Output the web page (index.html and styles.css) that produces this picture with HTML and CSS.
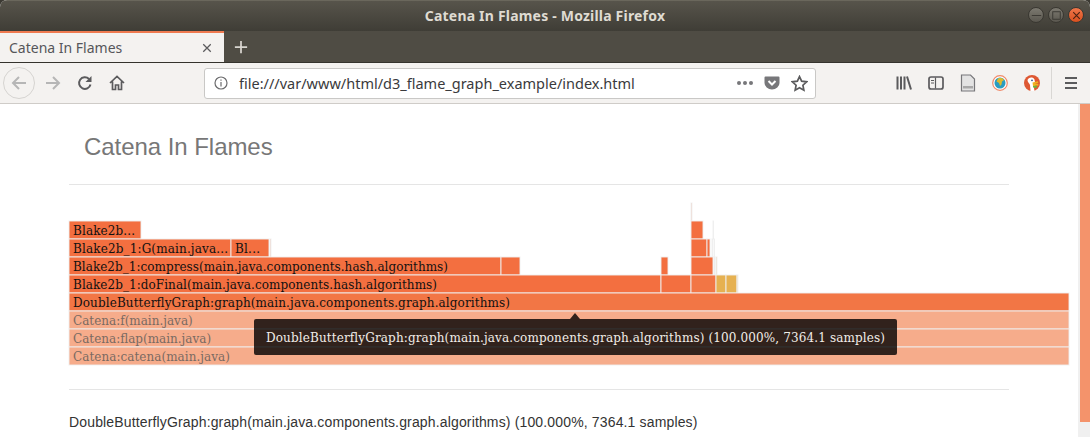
FILE: index.html
```html
<!DOCTYPE html>
<html lang="en">
<head>
    <meta charset="UTF-8">
    <title>Catena In Flames</title>
    <link rel="stylesheet" href="styles.css">
</head>
<body>
    <div class="window">
        <div class="titlebar">
            <span class="window-title">Catena In Flames - Mozilla Firefox</span>
            <div class="window-buttons">
                <span class="win-btn"><svg viewBox="0 0 16 16"><path d="M3 8h10" class="win-glyph"/></svg></span>
                <span class="win-btn"><svg viewBox="0 0 16 16"><rect x="4" y="4" width="8" height="8" class="win-glyph"/></svg></span>
                <span class="win-btn win-close"><svg viewBox="0 0 16 16"><path d="M4.500 4.500l7 7M11.500 4.500l-7 7" class="win-glyph dark"/></svg></span>
            </div>
        </div>

        <div class="tabstrip">
            <div class="tab">
                <span class="tab-label">Catena In Flames</span>
                <svg class="tab-close" viewBox="0 0 12 12"><path d="M1.500 1.500l9 9M10.500 1.500l-9 9"/></svg>
            </div>
            <svg class="new-tab" viewBox="0 0 16 16"><path d="M8 1v14M1 8h14"/></svg>
        </div>

        <div class="toolbar">
            <span class="back-btn">
                <svg class="icon" viewBox="0 0 16 16"><path class="line pale" d="M15 8H2M8 2L2 8l6 6"/></svg>
            </span>
            <svg class="icon forward" viewBox="0 0 16 16"><path class="line pale" d="M1 8h13M8 2l6 6-6 6"/></svg>
            <svg class="icon reload" viewBox="0 0 16 16"><path class="line" d="M13.500 9.500A5.800 5.800 0 1 1 12 4"/><path class="solid" d="M14.500 1v6h-6z"/></svg>
            <svg class="icon home" viewBox="0 0 16 16"><path class="line thin" d="M1 8l7-6.500L15 8M3.500 6.500V14.500H6.500V10H9.500V14.500H12.500V6.500"/></svg>

            <div class="urlbar">
                <svg class="info" viewBox="0 0 14 14"><circle cx="7" cy="7" r="6"/><path d="M7 6v4.500M7 3.500v1.300"/></svg>
                <span class="url">file:///var/www/html/d3_flame_graph_example/index.html</span>
                <span class="dots"><i></i><i></i><i></i></span>
                <svg class="pocket" viewBox="0 0 16 16"><path class="solid" d="M1.500 1.500h13a1 1 0 0 1 1 1V8a7.500 6.500 0 0 1-15 0V2.500a1 1 0 0 1 1-1z"/><path class="pocket-check" d="M4.500 6L8 9.500 11.500 6"/></svg>
                <svg class="star" viewBox="0 0 16 16"><path d="M8 1.500l2 4.300 4.700.6-3.500 3.200.9 4.700L8 12l-4.100 2.300.9-4.700L1.300 6.400 6 5.800z"/></svg>
            </div>

            <div class="tools">
                <svg class="icon" viewBox="0 0 16 16"><path class="line" d="M1.500 1.500v13M5 1.500v13M8.500 1.500v13M11 1.500l4 13"/></svg>
                <svg class="icon" viewBox="0 0 16 16"><rect class="line thin" x="1" y="2" width="14" height="12" rx="2"/><path class="sidebar-lines" d="M7.500 2.500v11M3 5.500h3M3 8h3"/></svg>
                <svg class="icon page-icon" viewBox="0 0 16 18"><path class="page-sheet" d="M1.500 1h9l4 4v12h-13z"/><path class="page-bar" d="M3 12h10v2.500H3z"/></svg>
                <svg class="icon" viewBox="0 0 16 16"><circle cx="8" cy="8" r="7.300" class="globe-ring"/><circle cx="8" cy="8" r="5.500" class="globe-sea"/><path class="globe-land" d="M6 3.500c2-1 5-.5 6 1.500l-2 1.500-.5 3L8 11 7 8 4.500 6.500z"/></svg>
                <svg class="icon" viewBox="0 0 16 16"><circle cx="8" cy="8" r="8" class="duck-bg"/><path class="duck-body" d="M3.500 5C4.500 2 9 1.500 10.500 4.500L11 7.500 10 13l.5 3H6.500L6 10C5.500 8 3.500 7.500 3.500 5z"/><path class="duck-beak" d="M8.500 7.500l5.500-1.300.3 1.600-3.800 1 3.800-.1.200 1.700L9 11z"/><path class="duck-tie" d="M9 11l4-.5-.5 2.500-3.500-.5z"/><circle cx="8" cy="5.300" r=".9" class="duck-eye"/></svg>
            </div>
            <svg class="icon menu" viewBox="0 0 16 16"><path class="line" d="M2 3h12M2 8h12M2 13h12"/></svg>
        </div>

        <div class="viewport">
            <div class="page">
                <div class="header">
                    <h3>Catena In Flames</h3>
                </div>

                <div class="chart">
                    <svg class="flame" width="1000" height="162" viewBox="0 0 1000 162">
                        <rect class="frame" x="622" y="0" width="1" height="18"/>

                        <rect class="frame" x="0" y="18" width="72" height="18"/>
                        <text class="label" x="4" y="32" textLength="62">Blake2b...</text>
                        <rect class="frame" x="622" y="18" width="12" height="18"/>
                        <rect class="frame thin" x="644" y="18" width="0.5" height="18"/>

                        <rect class="frame" x="0" y="36" width="162" height="18"/>
                        <text class="label" x="4" y="50" textLength="155">Blake2b_1:G(main.java...</text>
                        <rect class="frame" x="162" y="36" width="38" height="18"/>
                        <text class="label" x="166" y="50" textLength="25">Bl...</text>
                        <rect class="frame" x="201" y="36" width="1" height="18"/>
                        <rect class="frame" x="622" y="36" width="16" height="18"/>
                        <rect class="frame" x="638" y="36" width="3" height="18"/>
                        <rect class="frame thin" x="643" y="36" width="0.5" height="18"/>
                        <rect class="frame thin" x="645" y="36" width="0.5" height="18"/>

                        <rect class="frame" x="0" y="54" width="432" height="18"/>
                        <text class="label" x="4" y="68" textLength="375">Blake2b_1:compress(main.java.components.hash.algorithms)</text>
                        <rect class="frame" x="432" y="54" width="19" height="18"/>
                        <rect class="frame" x="592" y="54" width="7" height="18"/>
                        <rect class="frame" x="622" y="54" width="22" height="18"/>
                        <rect class="frame thin" x="645" y="54" width="1" height="18"/>
                        <rect class="frame warm" x="647" y="54" width="1" height="18"/>

                        <rect class="frame" x="0" y="72" width="592" height="18"/>
                        <text class="label" x="4" y="86" textLength="364">Blake2b_1:doFinal(main.java.components.hash.algorithms)</text>
                        <rect class="frame" x="592" y="72" width="30" height="18"/>
                        <rect class="frame amber" x="622" y="72" width="25" height="18"/>
                        <rect class="frame warm" x="647" y="72" width="10" height="18"/>
                        <rect class="frame warm" x="657" y="72" width="11" height="18"/>
                        <rect class="frame warm" x="668" y="72" width="1" height="18"/>

                        <rect class="frame amber" x="0" y="90" width="1000" height="18"/>
                        <text class="label" x="4" y="104" textLength="437">DoubleButterflyGraph:graph(main.java.components.graph.algorithms)</text>

                        <rect class="frame pale" x="0" y="108" width="1000" height="18"/>
                        <text class="label faded" x="4" y="122">Catena:f(main.java)</text>
                        <rect class="frame pale" x="0" y="126" width="1000" height="18"/>
                        <text class="label faded" x="4" y="140">Catena:flap(main.java)</text>
                        <rect class="frame pale" x="0" y="144" width="1000" height="18"/>
                        <text class="label faded" x="4" y="158" textLength="157">Catena:catena(main.java)</text>
                    </svg>
                    <div class="tooltip">DoubleButterflyGraph:graph(main.java.components.graph.algorithms) (100.000%, 7364.1 samples)</div>
                </div>

                <div class="details">DoubleButterflyGraph:graph(main.java.components.graph.algorithms) (100.000%, 7364.1 samples)</div>
            </div>
            <div class="scrollbar"><div class="thumb"></div></div>
        </div>
    </div>
</body>
</html>
```

FILE: styles.css
```css
html, body {
    margin: 0;
    padding: 0;
    height: 100%;
    background-color: #3c3a33;
    overflow: hidden;
}

.window {
    width: 1090px;
    height: 437px;
    display: flex;
    flex-direction: column;
    overflow: hidden;
    border-radius: 7px 7px 0 0;
    background-color: #fff;
}

/* window title bar */
.titlebar {
    height: 31px;
    flex: none;
    display: flex;
    align-items: center;
    justify-content: center;
    position: relative;
    box-sizing: border-box;
    padding-bottom: 2px;
    border-top: 1px solid #6a675c;
    background: linear-gradient(#57544b, #3f3d36);
}

.window-title {
    font-family: "Noto Sans", sans-serif;
    font-size: 14px;
    font-weight: bold;
    color: #dfdbd2;
    letter-spacing: 0.2px;
}

.window-buttons {
    position: absolute;
    right: 6px;
    top: 6px;
    display: flex;
    gap: 4px;
}

.win-btn {
    width: 16px;
    height: 16px;
    box-sizing: border-box;
    border-radius: 50%;
    background: linear-gradient(#7c7970, #5a574f);
    border: 0.5px solid #3a3832;
    display: block;
}

.win-btn svg {
    display: block;
    width: 15px;
    height: 15px;
}

.win-close {
    background: linear-gradient(#f0764a, #d9501f);
}

.win-glyph {
    fill: none;
    stroke: #3a3832;
    stroke-width: 1;
}

.win-glyph.dark {
    stroke: #4a2212;
    stroke-width: 1.2;
}

/* tabs */
.tabstrip {
    height: 32px;
    flex: none;
    box-sizing: border-box;
    display: flex;
    align-items: center;
    background-color: #4f4c44;
    border-bottom: 1px solid #35332d;
}

.tab {
    width: 224px;
    height: 31px;
    box-sizing: border-box;
    display: flex;
    align-items: center;
    justify-content: space-between;
    padding: 0 12px 0 9px;
    background-color: #f4f2f0;
    border-top: 2px solid #ef7a50;
}

.tab-label {
    font-family: "Noto Sans", sans-serif;
    font-size: 14px;
    color: #56565a;
}

.tab-close {
    width: 10px;
    height: 10px;
    fill: none;
    stroke: #5a5a5c;
    stroke-width: 1.5;
}

.new-tab {
    width: 14px;
    height: 14px;
    margin-left: 10px;
    fill: none;
    stroke: #d8d5cf;
    stroke-width: 2;
}

/* navigation toolbar */
.toolbar {
    height: 41px;
    flex: none;
    box-sizing: border-box;
    display: flex;
    align-items: center;
    padding-left: 3px;
    background-color: #f4f2f0;
    border-bottom: 1px solid #cfccc8;
}

.icon {
    width: 16px;
    height: 16px;
    flex: none;
}

.line {
    fill: none;
    stroke: #5b5b5d;
    stroke-width: 2;
}

.line.thin {
    stroke-width: 1.7;
}

.line.pale {
    stroke: #b6b6b6;
}

.solid {
    fill: #5b5b5d;
}

.back-btn {
    width: 32px;
    height: 32px;
    box-sizing: border-box;
    border: 1px solid #d6d4d1;
    border-radius: 50%;
    display: flex;
    align-items: center;
    justify-content: center;
}

.forward {
    margin-left: 10px;
}

.reload {
    margin-left: 16px;
}

.home {
    margin-left: 16px;
}

.urlbar {
    width: 612px;
    height: 31px;
    margin-left: 79px;
    flex: none;
    box-sizing: border-box;
    display: flex;
    align-items: center;
    padding: 0 7px 0 9px;
    background-color: #fff;
    border: 1px solid #c9c8c6;
    border-radius: 3px;
}

.info {
    width: 14px;
    height: 14px;
    flex: none;
    fill: none;
    stroke: #6b6b6d;
    stroke-width: 1.2;
}

.url {
    flex: 1;
    margin-left: 11px;
    font-family: "Noto Sans", sans-serif;
    font-size: 14.5px;
    color: #3a3a3c;
}

.dots {
    display: flex;
    gap: 2px;
    margin-right: 11px;
}

.dots i {
    width: 4px;
    height: 4px;
    border-radius: 50%;
    background-color: #77777a;
}

.pocket {
    width: 16px;
    height: 16px;
    margin-right: 11px;
}

.pocket .solid {
    fill: #77777a;
}

.pocket-check {
    fill: none;
    stroke: #fff;
    stroke-width: 2;
}

.star {
    width: 17px;
    height: 17px;
    fill: none;
    stroke: #5b5b5d;
    stroke-width: 1.6;
}

.tools {
    display: flex;
    align-items: center;
    gap: 16px;
    margin-left: 80px;
    padding-right: 11px;
    border-right: 1px solid #d9d7d4;
    height: 32px;
}

.page-icon {
    height: 18px;
}

.page-sheet {
    fill: #e3e3e3;
    stroke: #77777a;
    stroke-width: 1.2;
}

.page-bar {
    fill: #a8a8a8;
}

.sidebar-lines {
    fill: none;
    stroke: #5b5b5d;
    stroke-width: 1.2;
}

.globe-ring {
    fill: #fff;
    stroke: #f08a6a;
    stroke-width: 1.2;
}

.globe-sea {
    fill: #2a9cc0;
}

.globe-land {
    fill: #d9b92f;
}

.duck-bg {
    fill: #de5833;
}

.duck-body {
    fill: #fff;
}

.duck-beak {
    fill: #f0b020;
}

.duck-tie {
    fill: #6cb33f;
}

.duck-eye {
    fill: #2d4f8e;
}

.menu {
    margin-left: 11px;
}

/* page area */
.viewport {
    flex: 1;
    min-height: 0;
    display: flex;
    background-color: #fff;
}

.page {
    flex: 1;
    padding-left: 69px;
    font-family: "Liberation Sans", Arial, sans-serif;
}

.header {
    width: 940px;
    height: 81px;
    box-sizing: border-box;
    padding: 29px 0 0 15px;
    border-bottom: 1px solid #e5e5e5;
}

h3 {
    margin: 0;
    font-size: 24px;
    font-weight: normal;
    line-height: 28px;
    letter-spacing: -0.05px;
    color: #777;
}

.chart {
    position: relative;
    width: 1000px;
    height: 186px;
    margin-top: 18px;
    box-sizing: border-box;
}

.flame {
    display: block;
    overflow: visible;
}

.frame {
    fill: #f36f40;
    stroke: #eee;
    stroke-width: 1;
    stroke-opacity: 0.9;
}

.frame.thin {
    fill: #ddd;
}

.frame.amber {
    fill: #f27645;
}

.frame.warm {
    fill: #e3a83e;
    fill-opacity: 0.9;
}

.frame.pale {
    fill: #f6ac8b;
}

.label {
    font-family: "DejaVu Serif", serif;
    font-size: 12px;
    fill: #111;
}

.label.faded {
    fill: #7a6a62;
}

.tooltip {
    position: absolute;
    left: 185px;
    top: 116px;
    height: 36px;
    box-sizing: border-box;
    padding: 2px 12px 0;
    display: flex;
    align-items: center;
    white-space: nowrap;
    font-family: "DejaVu Serif", serif;
    font-size: 12px;
    letter-spacing: 0.13px;
    color: #f2ede8;
    background-color: rgba(0, 0, 0, 0.8);
    border-radius: 2px;
}

.tooltip::before {
    content: "";
    position: absolute;
    left: 316px;
    top: -6px;
    border-left: 5px solid transparent;
    border-right: 5px solid transparent;
    border-bottom: 6px solid rgba(0, 0, 0, 0.8);
}

.details {
    width: 940px;
    box-sizing: border-box;
    border-top: 1px solid #e5e5e5;
    padding-top: 22px;
    font-size: 14px;
    line-height: 20px;
    letter-spacing: 0.15px;
    color: #333;
}

.scrollbar {
    width: 12px;
    flex: none;
    padding-left: 2px;
    box-sizing: border-box;
    background-color: #f0f0f0;
}

.thumb {
    height: 318px;
    background-color: #f4936b;
}
```
